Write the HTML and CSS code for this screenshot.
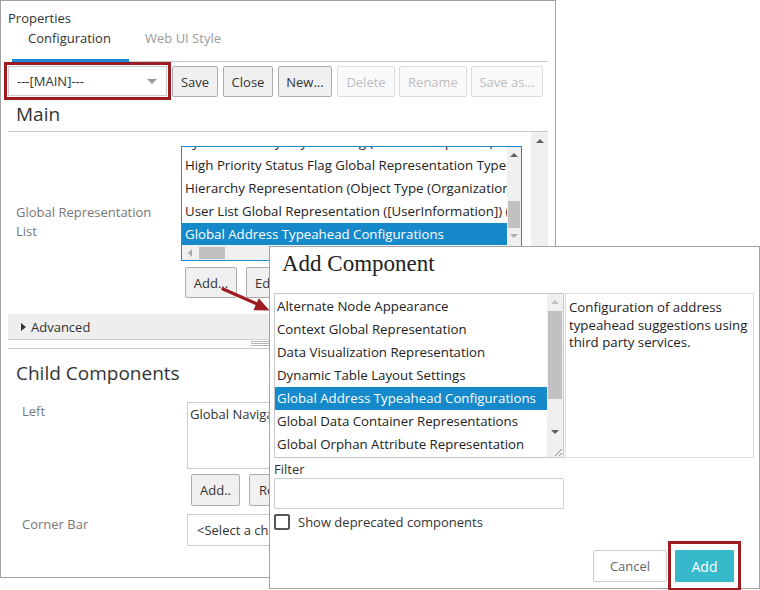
FILE: index.html
```html
<!DOCTYPE html>
<html>
<head>
<meta charset="utf-8">
<title>Properties</title>
<link rel="stylesheet" href="styles.css">
</head>
<body>
<div class="panel">
  <div class="props">Properties</div>
  <div class="tabs">
    <div class="tab active">Configuration</div>
    <div class="tab">Web UI Style</div>
  </div>
  <div class="toolbar">
    <div class="hl">
      <div class="select main-select"><span>---[MAIN]---</span><span class="caret"></span></div>
    </div>
    <button class="btn first w-save">Save</button>
    <button class="btn w-close">Close</button>
    <button class="btn w-new">New...</button>
    <button class="btn dis w-del">Delete</button>
    <button class="btn dis w-ren">Rename</button>
    <button class="btn dis w-sa">Save as...</button>
  </div>
  <div class="sect">Main</div>
  <div class="scroll">
    <div class="scroll-content">
      <div class="frow">
        <div class="label">Global Representation<br>List</div>
        <div class="field">
          <div class="listbox">
            <div class="lb-view">
              <div class="lb-items">
                <div class="lb-item">System Primary Key Ordering (Global Component)</div>
                <div class="lb-item">High Priority Status Flag Global Representation Type</div>
                <div class="lb-item">Hierarchy Representation (Object Type (Organization))</div>
                <div class="lb-item">User List Global Representation ([UserInformation]) (Default)</div>
                <div class="lb-item sel">Global Address Typeahead Configurations</div>
              </div>
              <div class="lb-vscroll">
                <span class="tri-up dark"></span>
                <span class="lb-thumb"></span>
                <span class="tri-down light"></span>
              </div>
            </div>
            <div class="lb-hscroll">
              <span class="tri-left"></span>
              <span class="h-thumb"></span>
            </div>
          </div>
          <div class="brow">
            <button class="btn2 w-add">Add...</button>
            <button class="btn2 w-edit">Edit...</button>
          </div>
        </div>
      </div>
      <div class="advanced"><span class="tri-right"></span>Advanced</div>
      <div class="grip"><span class="grip-lines"></span></div>
      <div class="sect2">Child Components</div>
      <div class="crow first-crow">
        <div class="clabel">Left</div>
        <div class="cfield">
          <div class="textarea">Global Navigation Bar</div>
          <div class="brow2">
            <button class="btn2 w-add2">Add..</button>
            <button class="btn2 w-rem">Remove</button>
          </div>
        </div>
      </div>
      <div class="crow second-crow">
        <div class="clabel cl2">Corner Bar</div>
        <div class="cfield">
          <div class="cselect">&lt;Select a child component&gt;</div>
        </div>
      </div>
    </div>
    <div class="vbar"><span class="tri-up dark"></span></div>
  </div>
</div>

<div class="dialog">
  <div class="dtitle">Add Component</div>
  <div class="dbody">
    <div class="dlist">
      <div class="ditems">
        <div class="ditem">Alternate Node Appearance</div>
        <div class="ditem">Context Global Representation</div>
        <div class="ditem">Data Visualization Representation</div>
        <div class="ditem">Dynamic Table Layout Settings</div>
        <div class="ditem sel">Global Address Typeahead Configurations</div>
        <div class="ditem">Global Data Container Representations</div>
        <div class="ditem">Global Orphan Attribute Representation</div>
      </div>
      <div class="dscroll">
        <span class="tri-up light"></span>
        <span class="d-thumb"></span>
        <span class="tri-down dark"></span>
        <svg class="dgrip" width="12" height="12" viewBox="0 0 12 12"><path d="M11 4 L4 11 M11 8 L8 11" stroke="#888" stroke-width="1" fill="none"/></svg>
      </div>
    </div>
    <div class="ddesc">Configuration of address<br>typeahead suggestions using<br>third party services.</div>
  </div>
  <div class="flabel">Filter</div>
  <div class="finput"></div>
  <div class="chkrow"><span class="chk"></span><span>Show deprecated components</span></div>
  <div class="dfoot">
    <button class="cancel">Cancel</button>
    <div class="hl2"><button class="addbtn">Add</button></div>
  </div>
</div>

<svg class="arrow" width="60" height="34" viewBox="0 0 60 34">
  <line x1="5" y1="5" x2="40" y2="20.5" stroke="#9e1b22" stroke-width="3.2" stroke-linecap="round"/>
  <polygon points="51.5,26.5 35.5,26.2 40.8,14.2" fill="#9e1b22"/>
</svg>
</body>
</html>
```

FILE: styles.css
```css
* { box-sizing: border-box; }
html, body { margin: 0; padding: 0; }
body {
  width: 760px;
  height: 590px;
  overflow: hidden;
  position: relative;
  background: #fff;
  font-family: "Open Sans", "Noto Sans", sans-serif;
  font-size: 13px;
  color: #333;
}
button { font-family: inherit; font-size: 13px; cursor: default; }

.panel {
  width: 556px;
  height: 578px;
  border: 1px solid #a3a3a3;
  display: flex;
  flex-direction: column;
  overflow: hidden;
}
.props { padding: 9px 0 0 7px; line-height: 16px; color: #333; }
.tabs {
  display: flex;
  margin: 0 7px 0 11px;
  height: 36px;
  border-bottom: 1px solid #c8c8c8;
}
.tab { padding: 4px 16px 0 16px; line-height: 16px; color: #9a9a9a; }
.tab.active {
  width: 117px;
  color: #333;
  border-bottom: 3px solid #1a8dd6;
  margin-bottom: -1px;
}

.toolbar { display: flex; align-items: flex-start; padding-left: 3px; height: 38px; flex: none; }
.hl { border: 3px solid #9e1b22; padding: 1px; }
.select {
  width: 159px;
  height: 30px;
  border: 1px solid #ccc;
  display: flex;
  align-items: center;
  justify-content: space-between;
  padding: 0 9px 0 8px;
  color: #333;
}
.caret {
  width: 0; height: 0;
  border-left: 5px solid transparent;
  border-right: 5px solid transparent;
  border-top: 5px solid #999;
}
.btn {
  height: 31px;
  margin: 4px 0 0 5px;
  border: 1px solid #adadad;
  border-radius: 2px;
  background: #f0f0f0;
  color: #333;
  padding: 0;
}
.btn.first { margin-left: 1px; }
.btn.dis { border-color: #dcdcdc; background: #fafafa; color: #bdbdbd; }
.w-save { width: 46px; }
.w-close { width: 50px; }
.w-new { width: 54px; }
.w-del { width: 58px; }
.w-ren { width: 68px; margin-left: 4px; }
.w-sa { width: 72px; margin-left: 4px; }

.sect {
  font-size: 19px;
  line-height: 24px;
  margin: 2px 7px 0 7px;
  padding: 0 0 5px 8px;
  border-bottom: 1px solid #c8c8c8;
  color: #333;
  flex: none;
}

.scroll { flex: 1; display: flex; margin: 0 7px; min-height: 0; overflow: hidden; }
.scroll-content { flex: 1; min-width: 0; }
.vbar {
  width: 17px;
  background: #f0f0f0;
  display: flex;
  flex-direction: column;
  align-items: center;
  padding-top: 7px;
}

.tri-up, .tri-down { width: 0; height: 0; border-left: 4px solid transparent; border-right: 4px solid transparent; display: block; }
.tri-up.dark { border-bottom: 4px solid #606060; }
.tri-up.light { border-bottom: 4px solid #c2c2c2; }
.tri-down.dark { border-top: 4px solid #606060; }
.tri-down.light { border-top: 4px solid #b0b0b0; }
.tri-left { width: 0; height: 0; border-top: 4px solid transparent; border-bottom: 4px solid transparent; border-right: 4px solid #a8a8a8; display: block; }
.tri-right { width: 0; height: 0; border-top: 4px solid transparent; border-bottom: 4px solid transparent; border-left: 5px solid #333; display: block; margin-right: 5px; }

.frow {
  display: grid;
  grid-template-columns: 165px auto;
  align-items: center;
  padding-left: 8px;
  margin-top: 14px;
}
.label { line-height: 19px; color: #777; }
.listbox { width: 341px; height: 115px; border: 1px solid #1e8bd3; display: flex; flex-direction: column; }
.lb-view { display: flex; height: 98px; }
.lb-items { flex: 1; min-width: 0; overflow: hidden; }
.lb-items .lb-item:first-child { margin-top: -16px; }
.lb-item { height: 23px; line-height: 23px; padding-left: 3px; white-space: nowrap; overflow: hidden; color: #222; font-size: 13.25px; }
.lb-item.sel, .ditem.sel { background: #1689cb; color: #fff; }
.lb-vscroll { width: 14px; background: #f0f0f0; display: flex; flex-direction: column; align-items: center; padding-top: 6px; }
.lb-thumb { width: 12px; height: 27px; margin-top: 44px; background: #c1c1c1; display: block; }
.lb-vscroll .tri-down { margin-top: 6px; }
.lb-hscroll { height: 15px; background: #f0f0f0; display: flex; align-items: center; padding-left: 6px; }
.h-thumb { width: 26px; height: 12px; margin-left: 7px; background: #c1c1c1; display: block; }

.brow { display: flex; gap: 9px; margin-top: 6px; padding-left: 4px; }
.btn2 {
  height: 31px;
  border: 1px solid #adadad;
  border-radius: 2px;
  background: #f0f0f0;
  color: #333;
  padding: 0;
  overflow: hidden;
  white-space: nowrap;
  text-align: left;
}
.w-add { width: 52px; text-align: center; }
.w-edit { width: 24px; padding-left: 8px; }

.advanced {
  margin-top: 16px;
  height: 26px;
  background: #eeeeee;
  border-bottom: 1px solid #d0d0d0;
  display: flex;
  align-items: center;
  padding-left: 13px;
  color: #333;
}
.grip { height: 9px; border-bottom: 1px solid #c8c8c8; padding: 1px 0 0 243px; }
.grip-lines {
  display: block;
  width: 19px;
  height: 6px;
  background: repeating-linear-gradient(to bottom, #b5b5b5 0, #b5b5b5 1px, transparent 1px, transparent 2px);
}
.sect2 { font-size: 19px; line-height: 24px; margin-top: 12px; padding-left: 8px; color: #333; }

.crow { display: grid; grid-template-columns: 165px auto; align-items: start; padding-left: 14px; }
.first-crow { margin-top: 17px; }
.second-crow { margin-top: 8px; }
.clabel { color: #777; line-height: 16px; padding-top: 1px; }
.clabel.cl2 { padding-top: 2px; }
.textarea { width: 83px; height: 67px; border: 1px solid #ccc; padding: 3px 2px; line-height: 16px; color: #333; white-space: nowrap; overflow: hidden; }
.brow2 { display: flex; gap: 9px; margin-top: 5px; padding-left: 4px; }
.brow2 .btn2 { height: 32px; }
.w-add2 { width: 49px; text-align: center; }
.w-rem { width: 21px; padding-left: 9px; }
.cselect { width: 83px; height: 32px; border: 1px solid #ccc; padding-left: 9px; line-height: 30px; color: #333; white-space: nowrap; overflow: hidden; }

/* dialog */
.dialog {
  position: absolute;
  left: 269px;
  top: 246px;
  width: 491px;
  height: 343px;
  border: 1px solid #a3a3a3;
  background: #fff;
}
.dtitle {
  margin-top: 3px;
  padding-left: 12px;
  font-family: "Liberation Serif", "Times New Roman", serif;
  font-size: 23px;
  line-height: 28px;
  color: #222;
}
.dbody { display: grid; grid-template-columns: 290px 189px; column-gap: 1px; margin-top: 15px; padding-left: 4px; }
.dlist { height: 165px; border: 1px solid #c8c8c8; display: flex; }
.ditems { flex: 1; padding-top: 1px; min-width: 0; }
.ditem { height: 23px; line-height: 23px; padding-left: 2px; color: #222; white-space: nowrap; overflow: hidden; font-size: 13.25px; }
.dscroll { width: 16px; background: #f0f0f0; display: flex; flex-direction: column; align-items: center; padding-top: 6px; position: relative; }
.d-thumb { width: 14px; height: 88px; margin-top: 7px; background: #c1c1c1; display: block; }
.dscroll .tri-down { margin-top: 31px; }
.dgrip { position: absolute; right: 0; bottom: 0; }
.ddesc { height: 165px; border: 1px solid #dddddd; padding: 5px 2px 0 3px; line-height: 17.5px; color: #222; white-space: nowrap; font-size: 13.25px; }
.flabel { margin-top: 3px; padding-left: 4px; line-height: 16px; color: #333; }
.finput { margin: 1px 0 0 4px; width: 290px; height: 31px; border: 1px solid #ccc; border-radius: 2px; }
.chkrow { margin-top: 5px; padding-left: 4px; display: flex; align-items: center; line-height: 16px; color: #333; }
.chk { width: 16px; height: 16px; border: 2px solid #555; border-radius: 2px; display: block; margin-right: 8px; }
.dfoot { margin-top: 11px; display: flex; justify-content: flex-end; align-items: flex-start; padding-right: 18px; }
.cancel {
  width: 74px;
  height: 32px;
  margin: 9px 1px 0 0;
  border: 1px solid #ccc;
  border-radius: 2px;
  background: #fff;
  color: #666;
  padding: 0;
}
.hl2 { border: 3px solid #9e1b22; padding: 6px 4px; }
.addbtn { width: 59px; height: 32px; border: none; border-radius: 1px; background: #35b9cb; color: #fff; padding: 0; font-size: 14px; display: block; }

.arrow { position: absolute; left: 218px; top: 284px; }
```
